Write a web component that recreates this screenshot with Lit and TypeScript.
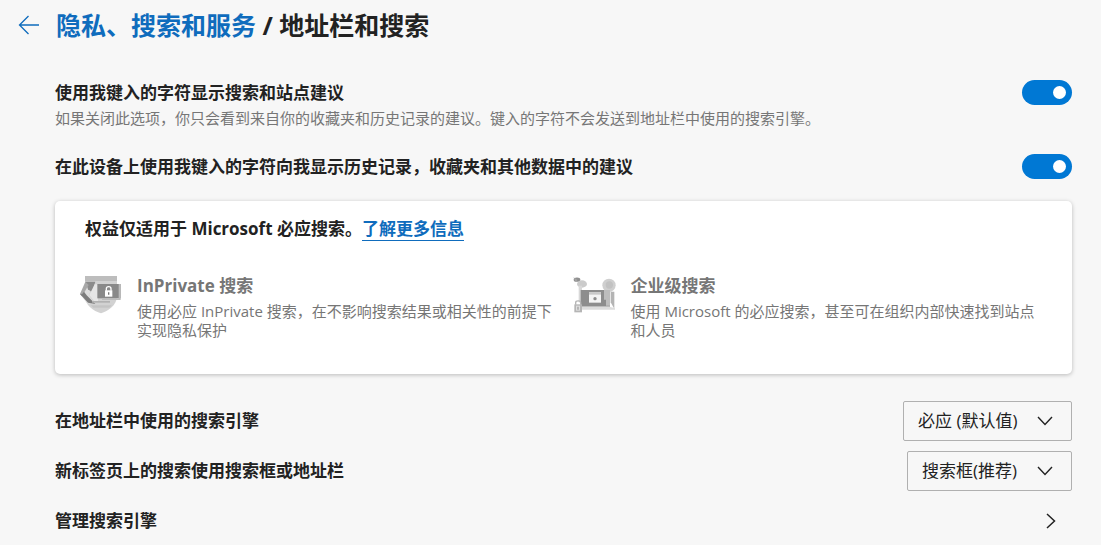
import { LitElement, html, svg, css } from "lit";
import { customElement, property } from "lit/decorators.js";

const backArrow = svg`<path d="M21 10H1.5M10.5 1L1.5 10L10.5 19" fill="none" stroke="currentColor" stroke-width="1.3" />`;

const privateArt = svg`
  <path d="M45 33H141V92C141 122 114 137 93 145C70 137 45 122 45 92Z" fill="#d2d2d2" />
  <path d="M45 33H141V48H45Z" fill="#bdbdbd" />
  <path d="M30 87L50 51H76L56 90L76 116H52Z" fill="#dedede" />
  <path d="M46 50H76L66 82L54 73Z" fill="#8c8c8c" />
  <path d="M46 50L30 87L36 94L56 60Z" fill="#a8a8a8" />
  <path d="M30 87L54 113L76 117L50 91L42 80L36 88Z" fill="#7d7d7d" />
  <path d="M58 90L74 58H84V108H72Z" fill="#e6e6e6" />
  <rect x="82" y="57" width="70" height="43" fill="#898989" />
  <path d="M146 57H152V105H96V100H146Z" fill="#bcbcbc" />
  <path d="M66 108H120V113H66Z" fill="#b2b2b2" />
  <path d="M62 121H125L118 128H70Z" fill="#c4c4c4" />
  <rect x="105" y="76" width="22" height="19" fill="#fff" />
  <path d="M109 77V71C109 63 123 63 123 71V77" fill="none" stroke="#fff" stroke-width="4" />
  <path d="M116 82V89" stroke="#777" stroke-width="4" />`;

const workArt = svg`
  <ellipse cx="33" cy="44" rx="10" ry="6.5" fill="#8f8f8f" />
  <path d="M22 37L34 44L30 51Z" fill="#a5a5a5" />
  <ellipse cx="48" cy="57" rx="15" ry="11" fill="#cbcbcb" />
  <path d="M38 62H48V112H38Z" fill="#d8d8d8" />
  <circle cx="129" cy="61" r="20" fill="#cfcfcf" />
  <circle cx="130" cy="60" r="11" fill="#c2c2c2" />
  <rect x="44" y="75" width="88" height="50" fill="#8d8d8d" />
  <path d="M114 75H132V122H120V104H114Z" fill="#bdbdbd" />
  <path d="M134 80H145V131L134 112Z" fill="#b4b4b4" />
  <rect x="69" y="82" width="36" height="31" fill="#f4f4f4" />
  <rect x="69" y="82" width="36" height="7" fill="#c9c9c9" />
  <circle cx="87" cy="101" r="5" fill="#8d8d8d" />
  <path d="M44 125H130L147 130V134H44Z" fill="#dcdcdc" />
  <rect x="25" y="118" width="23" height="24" fill="#b5b5b5" />
  <path d="M29 119V113C29 106 44 106 44 113V119" fill="none" stroke="#b5b5b5" stroke-width="4" />
  <path d="M30 122H42V137H30Z" fill="#dedede" />
  <path d="M36 125V134" stroke="#a0a0a0" stroke-width="4" />`;

@customElement("settings-toggle")
class SettingsToggle extends LitElement {
  @property() label = "";

  static styles = css`
    :host {
      display: block;
      flex: none;
    }
    .switch {
      appearance: none;
      display: flex;
      align-items: center;
      justify-content: flex-start;
      box-sizing: border-box;
      width: 50px;
      height: 25px;
      margin: 0;
      padding: 0 6px;
      border-radius: 13px;
      background: #8a8a8a;
      cursor: pointer;
    }
    .switch:checked {
      justify-content: flex-end;
      background: #0078d4;
    }
    .switch::before {
      content: "";
      width: 13px;
      height: 13px;
      border-radius: 50%;
      background: #fff;
    }
  `;

  render() {
    return html`<input class="switch" type="checkbox" role="switch" checked aria-label=${this.label} />`;
  }
}

@customElement("settings-select")
class SettingsSelect extends LitElement {
  @property() label = "";
  @property() value = "";

  static styles = css`
    :host {
      display: block;
      flex: none;
    }
    .box {
      display: grid;
      align-items: center;
    }
    .control,
    .chevron {
      grid-area: 1 / 1;
    }
    .control {
      appearance: none;
      box-sizing: border-box;
      height: 40px;
      padding: 0 53px 0 14px;
      border: 1px solid #b0b0b0;
      border-radius: 2px;
      background: transparent;
      color: #222;
      font: inherit;
    }
    .chevron {
      justify-self: end;
      margin-right: 19px;
      pointer-events: none;
    }
  `;

  render() {
    return html`<div class="box">
      <select class="control" aria-label=${this.label}>
        <option>${this.value}</option>
      </select>
      <svg class="chevron" width="16" height="10" viewBox="0 0 16 10" aria-hidden="true">
        <path d="M1 1L8 8.5L15 1" fill="none" stroke="#222" stroke-width="1.4" />
      </svg>
    </div>`;
  }
}

@customElement("app-root")
class AppRoot extends LitElement {
  static styles = css`
    :host {
      display: block;
      box-sizing: border-box;
      min-height: 100vh;
      padding: 0 29px 0 18px;
      background: #f7f7f7;
      color: #222;
      font-family: "Open Sans", "Noto Sans CJK SC", sans-serif;
      font-size: 17px;
      line-height: 24px;
    }
    a {
      color: #0f6cbd;
      text-decoration: none;
    }
    .header {
      display: flex;
      align-items: center;
      gap: 16px;
      height: 50px;
    }
    .back {
      display: flex;
      padding: 0;
      border: 0;
      background: none;
      color: #0f6cbd;
    }
    .title {
      margin: 0;
      font-size: 25px;
      font-weight: 700;
      line-height: 36px;
    }
    .content {
      padding: 30px 0 0 37px;
    }
    .row {
      display: flex;
      justify-content: space-between;
      align-items: flex-start;
      gap: 24px;
    }
    .row + .row {
      margin-top: 26px;
    }
    .name {
      margin: 0;
      font-size: 17px;
      font-weight: 700;
      line-height: 26px;
    }
    .desc {
      margin: 0;
      padding-top: 3px;
      color: #767676;
      font-size: 15px;
      line-height: 19px;
    }
    .card {
      margin: 21px 0 22px;
      padding: 15px 6px 34px 24px;
      border-radius: 5px;
      background: #fff;
      box-shadow: 0 1px 4px rgba(0, 0, 0, 0.25);
    }
    .card-title {
      padding-left: 6px;
    }
    .more {
      border-bottom: 1px solid #0f6cbd;
    }
    .benefits {
      display: grid;
      grid-template-columns: 1fr 1fr;
      margin-top: 31px;
    }
    .benefit {
      display: flex;
      align-items: flex-start;
      gap: 14px;
      padding-right: 20px;
    }
    .benefit .name {
      color: #767676;
    }
    .art {
      flex: none;
      margin-top: 2px;
    }
    .line {
      display: flex;
      justify-content: space-between;
      align-items: center;
      height: 50px;
    }
    .next {
      display: flex;
      padding: 0 16px;
      border: 0;
      background: none;
      color: #222;
    }
  `;

  render() {
    return html`
      <header class="header">
        <button class="back" aria-label="返回">
          <svg width="22" height="20" viewBox="0 0 22 20">${backArrow}</svg>
        </button>
        <h1 class="title"><a href="#privacy">隐私、搜索和服务</a> / 地址栏和搜索</h1>
      </header>
      <main class="content">
        <section class="row">
          <div>
            <h2 class="name">使用我键入的字符显示搜索和站点建议</h2>
            <p class="desc">如果关闭此选项，你只会看到来自你的收藏夹和历史记录的建议。键入的字符不会发送到地址栏中使用的搜索引擎。</p>
          </div>
          <settings-toggle label="使用我键入的字符显示搜索和站点建议"></settings-toggle>
        </section>
        <section class="row">
          <h2 class="name">在此设备上使用我键入的字符向我显示历史记录，收藏夹和其他数据中的建议</h2>
          <settings-toggle label="在此设备上使用我键入的字符向我显示历史记录，收藏夹和其他数据中的建议"></settings-toggle>
        </section>
        <section class="card">
          <h2 class="name card-title">权益仅适用于 Microsoft 必应搜索。<a class="more" href="#more">了解更多信息</a></h2>
          <div class="benefits">
            <div class="benefit">
              <svg class="art" width="44" height="40" viewBox="27 30 132 120" aria-hidden="true">${privateArt}</svg>
              <div>
                <h3 class="name">InPrivate 搜索</h3>
                <p class="desc">使用必应 InPrivate 搜索，在不影响搜索结果或相关性的前提下实现隐私保护</p>
              </div>
            </div>
            <div class="benefit">
              <svg class="art" width="44" height="40" viewBox="21 30 132 120" aria-hidden="true">${workArt}</svg>
              <div>
                <h3 class="name">企业级搜索</h3>
                <p class="desc">使用 Microsoft 的必应搜索，甚至可在组织内部快速找到站点和人员</p>
              </div>
            </div>
          </div>
        </section>
        <section class="line">
          <h2 class="name">在地址栏中使用的搜索引擎</h2>
          <settings-select label="在地址栏中使用的搜索引擎" value="必应 (默认值)"></settings-select>
        </section>
        <section class="line">
          <h2 class="name">新标签页上的搜索使用搜索框或地址栏</h2>
          <settings-select label="新标签页上的搜索使用搜索框或地址栏" value="搜索框(推荐)"></settings-select>
        </section>
        <section class="line">
          <h2 class="name">管理搜索引擎</h2>
          <button class="next" aria-label="管理搜索引擎">
            <svg width="10" height="16" viewBox="0 0 10 16">
              <path d="M1 1L8.5 8L1 15" fill="none" stroke="currentColor" stroke-width="1.5" />
            </svg>
          </button>
        </section>
      </main>
    `;
  }
}
